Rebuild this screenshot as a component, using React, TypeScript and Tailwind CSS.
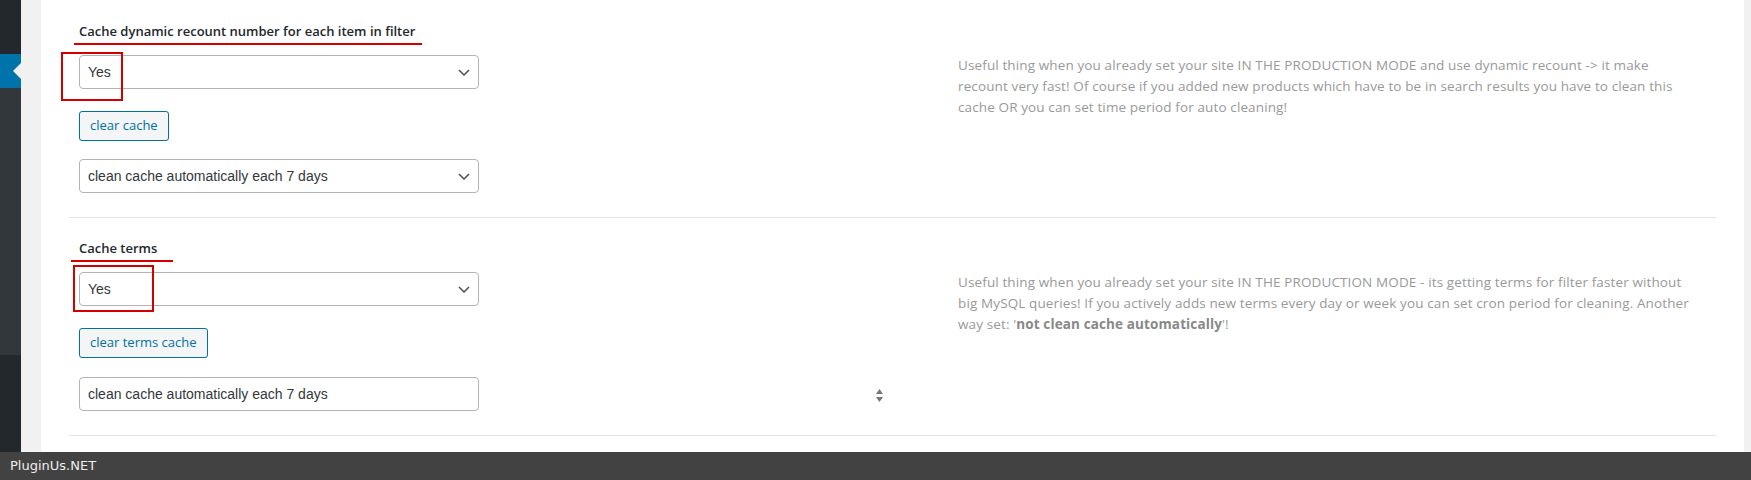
import React from "react";

const openSans = "font-['Open_Sans',sans-serif]";

function Chevron() {
  return (
    <svg width="12" height="7" viewBox="0 0 12 7" className="shrink-0">
      <path d="M1 1l5 5 5-5" fill="none" stroke="#555" strokeWidth="1.6" />
    </svg>
  );
}

function SelectBox({ text, chevron = true }: { text: string; chevron?: boolean }) {
  return (
    <div className="flex h-[34px] w-[400px] items-center justify-between rounded-[4px] border border-[#b4b4b4] bg-white pl-[8px] pr-[8px]">
      <span className="font-['Liberation_Sans',Arial,sans-serif] text-[14px] text-[#32373c]">{text}</span>
      {chevron && <Chevron />}
    </div>
  );
}

function Btn({ text }: { text: string }) {
  return (
    <div
      className={`flex h-[30px] w-fit items-center rounded-[3px] border border-[#0071a1] bg-[#f3f5f6] px-[10px] text-[13px] text-[#0071a1] ${openSans}`}
    >
      {text}
    </div>
  );
}

function Spinner() {
  return (
    <svg width="9" height="15" viewBox="0 0 9 15">
      <path d="M4.5 1L8 6H1z" fill="#777" />
      <path d="M1 9h7l-3.5 5z" fill="#777" />
    </svg>
  );
}

export default function App() {
  return (
    <div className="flex h-[480px] w-[1751px] flex-col overflow-hidden bg-[#f1f1f1]">
      <div className="flex h-[452px]">
        {/* sidebar */}
        <div className="flex w-[21px] flex-col">
          <div className="h-[54px] bg-[#23282d]" />
          <div className="flex h-[34px] items-center justify-end bg-[#0073aa]">
            <svg width="8" height="16" viewBox="0 0 8 16">
              <path d="M8 0v16L0 8z" fill="#f1f1f1" />
            </svg>
          </div>
          <div className="h-[267px] bg-[#32373c]" />
          <div className="flex-1 bg-[#23282d]" />
        </div>
        <div className="w-[20px] bg-[#f1f1f1]" />
        {/* main panel */}
        <div className="flex-1 bg-white px-[28px]">
          {/* section 1 */}
          <div className="border-b border-[#e2e4e7] pb-[24px] pl-[10px] pt-[22px]">
            <div className={`text-[13px] font-semibold leading-[18px] text-[#23282d] ${openSans}`}>
              Cache dynamic recount number for each item in filter
            </div>
            <div className="ml-[-5px] mt-[3px] h-[2px] w-[348px] bg-[#d40000]" />
            <div className="mt-[10px] flex">
              <div className="w-[879px] shrink-0">
                <div className="relative w-fit">
                  <SelectBox text="Yes" />
                  <div className="absolute left-[-18px] top-[-3px] h-[49px] w-[62px] border-2 border-[#d40000]" />
                </div>
                <div className="mt-[22px]">
                  <Btn text="clear cache" />
                </div>
                <div className="mt-[18px]">
                  <SelectBox text="clean cache automatically each 7 days" />
                </div>
              </div>
              <div className={`whitespace-nowrap text-[13.5px] leading-[21px] tracking-[0.12px] text-[#999] ${openSans}`}>
                Useful thing when you already set your site IN THE PRODUCTION MODE and use dynamic recount -&gt; it make
                <br />
                recount very fast! Of course if you added new products which have to be in search results you have to clean this
                <br />
                cache OR you can set time period for auto cleaning!
              </div>
            </div>
          </div>
          {/* section 2 */}
          <div className="border-b border-[#e2e4e7] pb-[24px] pl-[10px] pt-[21px]">
            <div className={`text-[13px] font-semibold leading-[18px] text-[#23282d] ${openSans}`}>Cache terms</div>
            <div className="ml-[-8px] mt-[3px] h-[2px] w-[102px] bg-[#d40000]" />
            <div className="mt-[10px] flex">
              <div className="w-[879px] shrink-0">
                <div className="relative w-fit">
                  <SelectBox text="Yes" />
                  <div className="absolute left-[-6px] top-[-7px] h-[47px] w-[81px] border-2 border-[#d40000]" />
                </div>
                <div className="mt-[22px]">
                  <Btn text="clear terms cache" />
                </div>
                <div className="mt-[19px] flex items-center">
                  <SelectBox text="clean cache automatically each 7 days" chevron={false} />
                  <div className="ml-[396px] mt-[3px] flex">
                    <Spinner />
                  </div>
                </div>
              </div>
              <div className={`whitespace-nowrap text-[13.5px] leading-[21px] tracking-[0.12px] text-[#999] ${openSans}`}>
                Useful thing when you already set your site IN THE PRODUCTION MODE - its getting terms for filter faster without
                <br />
                big MySQL queries! If you actively adds new terms every day or week you can set cron period for cleaning. Another
                <br />
                way set: '<b className="font-bold text-[#888]">not clean cache automatically</b>'!
              </div>
            </div>
          </div>
        </div>
        <div className="w-[7px] bg-[#f1f1f1]" />
      </div>
      <div className="flex h-[28px] items-center bg-[#424242] pl-[10px]">
        <span className="font-['DejaVu_Sans',sans-serif] text-[13px] text-[#eeeeee]">PluginUs.NET</span>
      </div>
    </div>
  );
}
